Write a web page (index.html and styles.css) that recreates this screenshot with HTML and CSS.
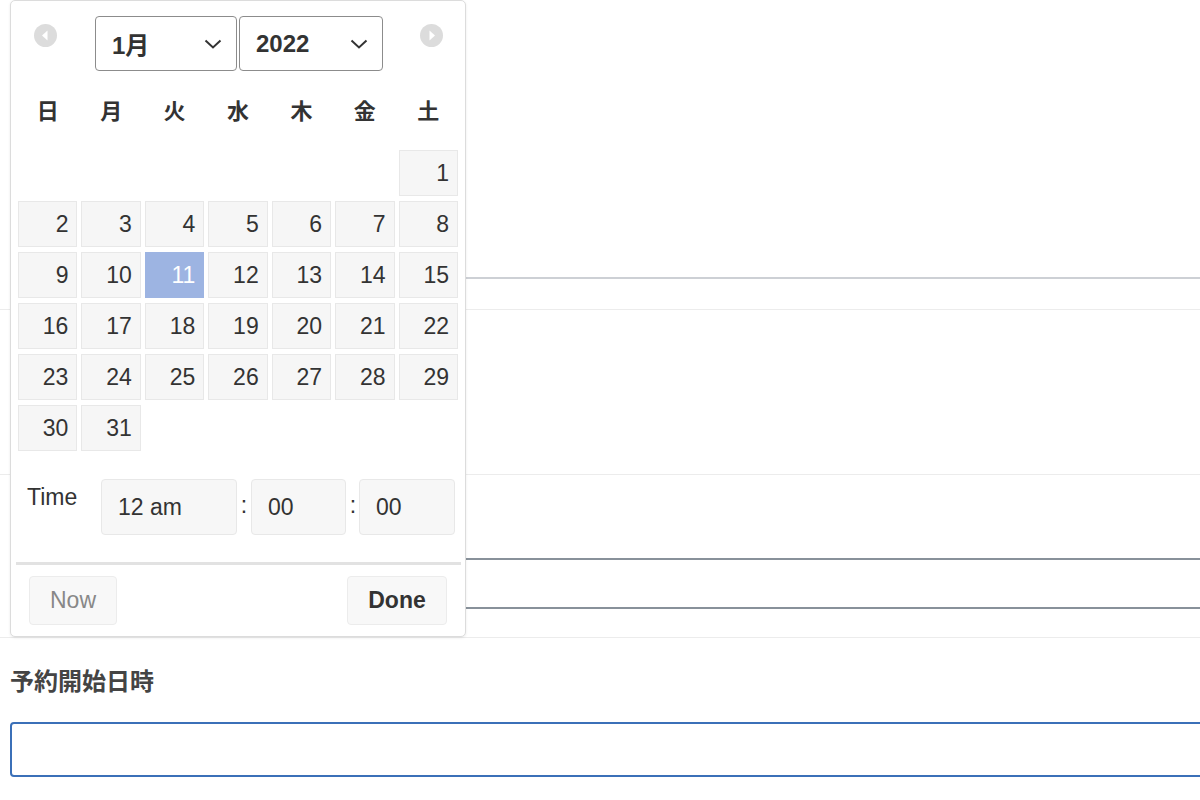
FILE: index.html
```html
<!DOCTYPE html>
<html lang="ja">
<head>
  <meta charset="UTF-8" />
  <meta name="viewport" content="width=device-width, initial-scale=1" />
  <title>予約設定</title>
  <link rel="stylesheet" href="styles.css">
</head>
<body>

  <form class="form">
    <div class="form-row row-top">
      <div class="field-rule"></div>
    </div>
    <div class="form-row row-mid"></div>
    <div class="form-row row-end">
      <input type="text" class="text-input" />
    </div>
    <div class="form-row row-start">
      <label class="field-label">予約開始日時</label>
      <input type="text" class="text-input is-focus" />
    </div>
  </form>

  <!-- 日付ピッカー -->
  <div class="picker">
    <div class="picker-header">
      <span class="nav-btn nav-prev">
        <svg width="23" height="23" viewBox="0 0 23 23"><circle cx="11.5" cy="11.5" r="11.5" fill="#dcdcdc"/><path d="M13.5 6.5 L8 11.5 L13.5 16.5 Z" fill="#fff"/></svg>
      </span>
      <div class="pick-select sel-month">
        <span>1月</span>
        <svg width="18" height="10" viewBox="0 0 18 10"><path d="M1.5 1.5 L9 8.5 L16.5 1.5" fill="none" stroke="#333" stroke-width="2"/></svg>
      </div>
      <div class="pick-select sel-year">
        <span>2022</span>
        <svg width="18" height="10" viewBox="0 0 18 10"><path d="M1.5 1.5 L9 8.5 L16.5 1.5" fill="none" stroke="#333" stroke-width="2"/></svg>
      </div>
      <span class="nav-btn nav-next">
        <svg width="23" height="23" viewBox="0 0 23 23"><circle cx="11.5" cy="11.5" r="11.5" fill="#dcdcdc"/><path d="M9.5 6.5 L15 11.5 L9.5 16.5 Z" fill="#fff"/></svg>
      </span>
    </div>

    <div class="week-head">
      <span>日</span><span>月</span><span>火</span><span>水</span><span>木</span><span>金</span><span>土</span>
    </div>

    <div class="days">
      <span class="blank"></span><span class="blank"></span><span class="blank"></span>
      <span class="blank"></span><span class="blank"></span><span class="blank"></span>
      <span class="day">1</span>
      <span class="day">2</span><span class="day">3</span><span class="day">4</span><span class="day">5</span>
      <span class="day">6</span><span class="day">7</span><span class="day">8</span>
      <span class="day">9</span><span class="day">10</span><span class="day active">11</span><span class="day">12</span>
      <span class="day">13</span><span class="day">14</span><span class="day">15</span>
      <span class="day">16</span><span class="day">17</span><span class="day">18</span><span class="day">19</span>
      <span class="day">20</span><span class="day">21</span><span class="day">22</span>
      <span class="day">23</span><span class="day">24</span><span class="day">25</span><span class="day">26</span>
      <span class="day">27</span><span class="day">28</span><span class="day">29</span>
      <span class="day">30</span><span class="day">31</span>
    </div>

    <div class="time-row">
      <span class="time-label">Time</span>
      <span class="time-box box-hour">12 am</span>
      <span class="time-sep">:</span>
      <span class="time-box box-min">00</span>
      <span class="time-sep">:</span>
      <span class="time-box box-sec">00</span>
    </div>

    <div class="picker-foot">
      <button type="button" class="foot-btn btn-now">Now</button>
      <button type="button" class="foot-btn btn-done">Done</button>
    </div>
  </div>

</body>
</html>
```

FILE: styles.css
```css
body {
  margin: 0;
  background: #fff;
  color: #333;
  font-family: "Helvetica Neue", "Liberation Sans", "Noto Sans CJK JP", sans-serif;
  overflow: hidden;
}

.form {
  position: relative;
}

.form-row {
  box-sizing: border-box;
  border-bottom: 1px solid #ececec;
  padding-left: 10px;
}

.row-top {
  height: 310px;
  padding-top: 277px;
}

.field-rule {
  border-top: 2px solid #cdd0d5;
}

.row-mid {
  height: 165px;
}

.row-end {
  height: 163px;
  padding-top: 83px;
}

.row-end .text-input {
  height: 51px;
  border: 2px solid #88919a;
}

.row-start {
  padding-top: 29px;
  border-bottom: none;
}

.field-label {
  display: block;
  font-size: 24px;
  line-height: 30px;
  font-weight: bold;
  color: #444;
}

.text-input {
  display: block;
  box-sizing: border-box;
  width: 1220px;
  margin: 0;
  border-radius: 4px;
  background: #fff;
  outline: none;
}

.text-input.is-focus {
  margin-top: 25px;
  height: 55px;
  border: 2px solid #3b70b8;
}

/* datepicker popup */
.picker {
  position: absolute;
  left: 10px;
  top: 0;
  width: 456px;
  box-sizing: border-box;
  background: #fff;
  border: 1px solid #dcdcdc;
  border-radius: 5px;
  box-shadow: 0 1px 3px rgba(0,0,0,0.08);
  padding-bottom: 11px;
}

.picker-header {
  display: flex;
  align-items: flex-start;
  padding: 15px 0 0 23px;
}

.nav-btn {
  display: block;
  width: 23px;
  height: 23px;
  margin-top: 8px;
}

.nav-btn svg {
  display: block;
}

.pick-select {
  display: flex;
  align-items: center;
  justify-content: space-between;
  box-sizing: border-box;
  height: 55px;
  padding: 0 14px 0 16px;
  border: 1px solid #8c8c8c;
  border-radius: 4px;
  font-size: 24px;
  font-weight: bold;
  color: #333;
}

.sel-month {
  width: 142px;
  margin-left: 38px;
}

.sel-year {
  width: 144px;
  margin-left: 2px;
}

.nav-next {
  margin-left: 37px;
}

.week-head {
  display: grid;
  grid-template-columns: repeat(7, 1fr);
  column-gap: 4px;
  padding: 0 7px;
  margin-top: 26px;
  font-size: 22px;
  line-height: 30px;
  font-weight: bold;
  text-align: center;
  color: #333;
}

.days {
  display: grid;
  grid-template-columns: repeat(7, 1fr);
  grid-auto-rows: 46px;
  gap: 5px 4px;
  padding: 0 7px;
  margin-top: 23px;
}

.day {
  display: flex;
  align-items: center;
  justify-content: flex-end;
  padding-right: 8px;
  background: #f6f6f6;
  border: 1px solid #e8e8e8;
  font-size: 23px;
  color: #333;
}

.day.active {
  background: #9db4e2;
  border-color: #9db4e2;
  color: #fff;
}

.time-row {
  display: flex;
  align-items: flex-start;
  margin-top: 28px;
  padding-left: 16px;
  font-size: 23px;
  color: #333;
}

.time-label {
  width: 74px;
  margin-top: 5px;
}

.time-box {
  display: flex;
  align-items: center;
  box-sizing: border-box;
  height: 56px;
  padding-left: 16px;
  background: #f7f7f7;
  border: 1px solid #e8e8e8;
  border-radius: 4px;
}

.box-hour {
  width: 136px;
}

.box-min {
  width: 95px;
}

.box-sec {
  width: 96px;
}

.time-sep {
  width: 14px;
  line-height: 56px;
  text-align: center;
  margin-top: -2px;
}

.time-sep + .box-sec {
  margin-left: -1px;
}

.picker-foot {
  display: flex;
  justify-content: space-between;
  margin: 27px 4px 0 5px;
  padding: 11px 14px 0 13px;
  border-top: 3px solid #e2e2e2;
}

.foot-btn {
  height: 49px;
  padding: 0;
  background: #f8f8f8;
  border: 1px solid #ececec;
  border-radius: 4px;
  font-family: inherit;
  font-size: 23px;
  cursor: pointer;
}

.btn-now {
  width: 88px;
  color: #888;
}

.btn-done {
  width: 100px;
  font-weight: bold;
  color: #333;
}
```
